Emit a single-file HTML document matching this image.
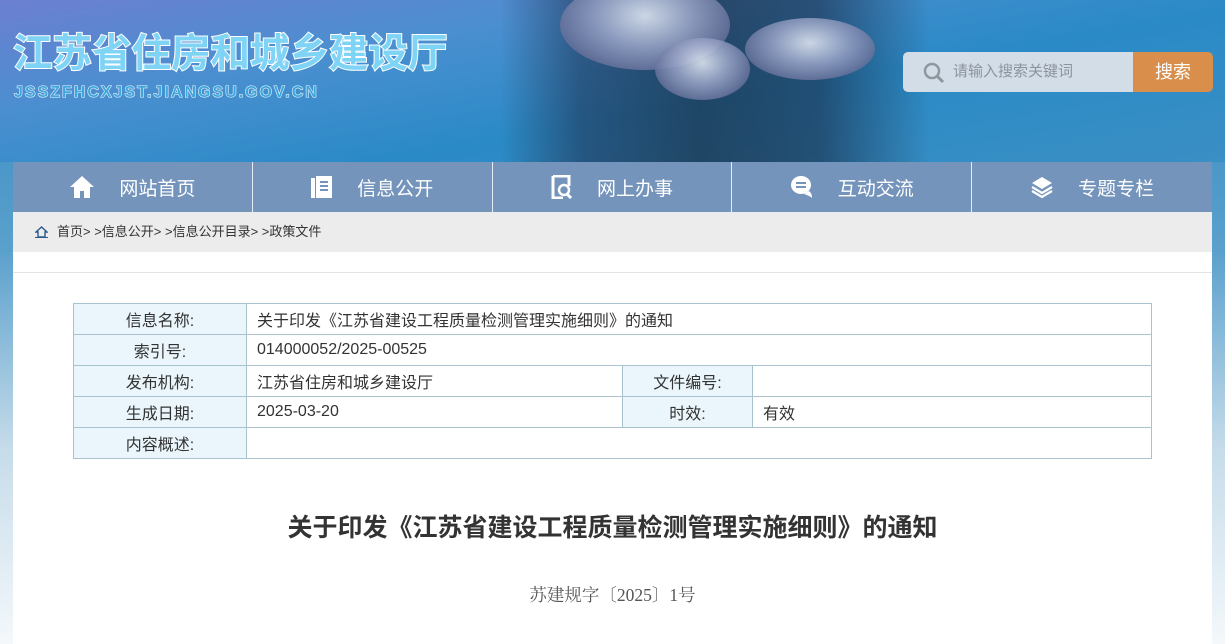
<!DOCTYPE html>
<html><head><meta charset="utf-8"><style>
*{margin:0;padding:0;box-sizing:border-box}
body{width:1225px;height:644px;overflow:hidden;font-family:"Liberation Sans","Noto Sans CJK SC",sans-serif;background:linear-gradient(180deg,#2f87c0 0,#5aa0cc 250px,#c6dcea 450px,#f4f8fb 644px);position:relative}
.banner{position:absolute;left:0;top:0;width:1225px;height:162px;overflow:hidden;
background:linear-gradient(90deg,rgba(0,0,0,0) 0,rgba(0,0,0,0) 500px,rgba(30,45,75,.55) 580px,rgba(25,40,60,.7) 700px,rgba(25,40,65,.6) 820px,rgba(0,0,0,0) 930px),
linear-gradient(170deg,#6c7fd0 0,#4a8fd0 30%,#2a8ac6 60%,#3a8fc4 100%)}
.bld{position:absolute;border-radius:50%;background:radial-gradient(ellipse at 50% 40%,#e8eef8 0,#9aa5c8 40%,#5a6590 80%);opacity:.85}
.title{position:absolute;left:13px;top:27px;font-size:39.5px;font-weight:bold;color:#7fd4f6;-webkit-text-stroke:2px #fff;letter-spacing:0;font-family:"Noto Sans CJK SC",sans-serif;line-height:48px;paint-order:stroke fill}
.url{position:absolute;left:14px;top:84px;font-size:16px;font-weight:bold;color:#3fa6dc;-webkit-text-stroke:1px #fff;letter-spacing:2px;paint-order:stroke fill}
.search{position:absolute;left:903px;top:52px;width:310px;height:40px;border-radius:5px;overflow:hidden;display:flex}
.search .in{width:230px;background:#d3dde8;color:#8b949e;font-size:15px;line-height:40px;padding-left:50px;position:relative}
.search .btn{flex:1;background:#d98f4b;color:#fff;font-size:18px;line-height:40px;text-align:center}
.nav{position:absolute;left:13px;top:162px;width:1199px;height:50px;background:#7594bb;display:flex}
.nav div{width:240px;border-right:1px solid #e6ecf4;color:#fff;font-size:19px;display:flex;align-items:center;justify-content:center;gap:24px}
.nav div:last-child{border-right:0}
.crumb{position:absolute;left:13px;top:212px;width:1199px;height:40px;background:#ececec;font-size:13px;color:#333;line-height:40px;padding-left:44px}
.main{position:absolute;left:13px;top:252px;width:1199px;height:392px;background:#fff}
.line{position:absolute;left:0;top:20px;width:1199px;height:1px;background:#e3e3e3}
table{position:absolute;left:60px;top:51px;width:1079px;border-collapse:collapse;font-size:16px;color:#333}
td{border:1px solid #a9c3ce;height:31px;padding:0 10px}
td.k{background:#eaf6fc;text-align:center}
h1{position:absolute;left:0;width:1199px;top:256px;text-align:center;font-size:25px;font-weight:bold;color:#333}
.no{position:absolute;left:0;width:1199px;top:330px;text-align:center;font-size:17.5px;color:#555;font-family:"Liberation Serif","Noto Serif CJK SC",serif}
</style></head><body>
<div class="banner">
<div class="bld" style="left:560px;top:-20px;width:170px;height:90px"></div>
<div class="bld" style="left:655px;top:38px;width:95px;height:62px"></div>
<div class="bld" style="left:745px;top:18px;width:130px;height:62px"></div>
<div class="title">江苏省住房和城乡建设厅</div>
<div class="url">JSSZFHCXJST.JIANGSU.GOV.CN</div>
<div class="search"><div class="in"><svg style="position:absolute;left:20px;top:10px" width="22" height="22" viewBox="0 0 22 22"><circle cx="9" cy="9" r="7" fill="none" stroke="#8e969e" stroke-width="2.5"/><path d="M14 14l6 6" stroke="#8e969e" stroke-width="3"/></svg>请输入搜索关键词</div><div class="btn">搜索</div></div>
</div>
<div class="nav">
<div><svg width="26" height="24" viewBox="0 0 26 24"><path d="M13 1L1 12h4v11h6v-7h4v7h6V12h4z" fill="#fff"/></svg>网站首页</div>
<div><svg width="22" height="24" viewBox="0 0 22 24"><rect x="0" y="3" width="4" height="20" fill="#fff"/><rect x="5" y="1" width="16" height="22" fill="#fff"/><path d="M9 7h8M9 11h8M9 15h8" stroke="#7594bb" stroke-width="2"/></svg>信息公开</div>
<div><svg width="22" height="24" viewBox="0 0 22 24"><path d="M2 1h16v10" fill="none" stroke="#fff" stroke-width="3"/><path d="M2 1v22h10" fill="none" stroke="#fff" stroke-width="3"/><circle cx="13" cy="15" r="5" fill="none" stroke="#fff" stroke-width="2.5"/><path d="M16 19l4 4" stroke="#fff" stroke-width="3"/></svg>网上办事</div>
<div><svg width="24" height="24" viewBox="0 0 24 24"><ellipse cx="11" cy="10" rx="10" ry="9" fill="#fff"/><path d="M6 8h10M6 12h10" stroke="#7594bb" stroke-width="2"/><path d="M14 19q6 2 8 4q0-5-3-7" fill="#fff"/></svg>互动交流</div>
<div><svg width="24" height="24" viewBox="0 0 24 24"><path d="M12 2l10 6-10 6L2 8z" fill="#fff"/><path d="M2 12l10 6 10-6M2 16l10 6 10-6" fill="none" stroke="#fff" stroke-width="2.2"/></svg>专题专栏</div>
</div>
<div class="crumb"><svg style="position:absolute;left:22px;top:14px" width="13" height="12" viewBox="0 0 13 12"><path d="M6.5 1L1 6h2v5h7V6h2z" fill="none" stroke="#2b5a8e" stroke-width="1.4"/><path d="M0 11.5h13" stroke="#2b5a8e"/></svg>首页&gt; &gt;信息公开&gt; &gt;信息公开目录&gt; &gt;政策文件</div>
<div class="main">
<div class="line"></div>
<table>
<tr><td class="k" style="width:173px">信息名称:</td><td colspan="3">关于印发《江苏省建设工程质量检测管理实施细则》的通知</td></tr>
<tr><td class="k">索引号:</td><td colspan="3">014000052/2025-00525</td></tr>
<tr><td class="k">发布机构:</td><td style="width:376px">江苏省住房和城乡建设厅</td><td class="k" style="width:130px">文件编号:</td><td></td></tr>
<tr><td class="k">生成日期:</td><td>2025-03-20</td><td class="k">时效:</td><td>有效</td></tr>
<tr><td class="k">内容概述:</td><td colspan="3"></td></tr>
</table>
<h1>关于印发《江苏省建设工程质量检测管理实施细则》的通知</h1>
<div class="no">苏建规字〔2025〕1号</div>
</div>
</body></html>
